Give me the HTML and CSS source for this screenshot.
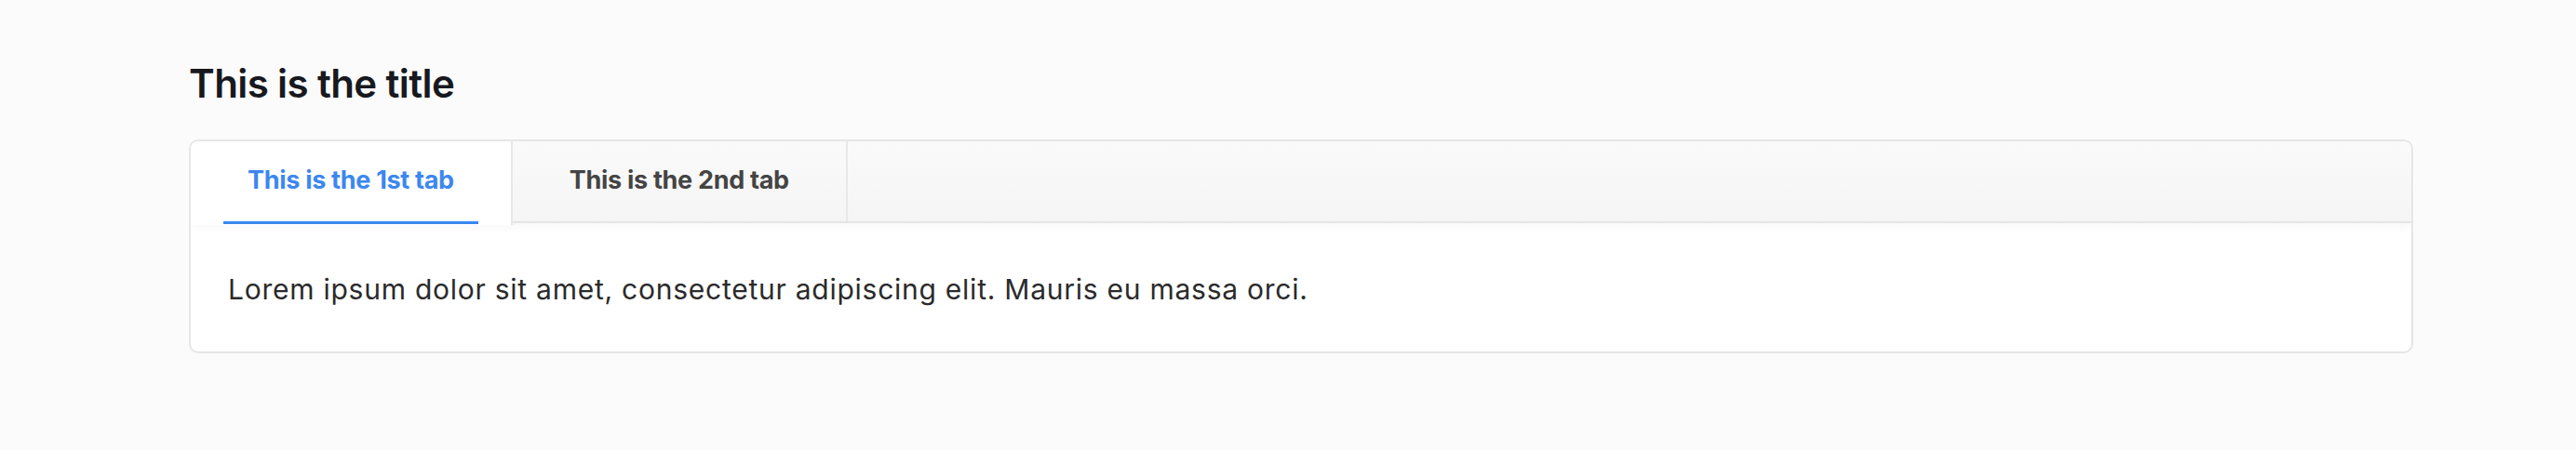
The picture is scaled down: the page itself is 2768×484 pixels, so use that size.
FILE: index.html
```html
<!DOCTYPE html>
<html lang="en">
<head>
  <meta charset="UTF-8">
  <title>Tabs</title>
  <link rel="stylesheet" href="styles.css">
</head>
<body>
  <div class="page">
    <h1 class="title">This is the title</h1>
    <div class="tabsCard">
      <div class="tabBar">
        <div class="tab active"><span class="tabLabel">This is the 1st tab</span></div>
        <div class="tab"><span class="tabLabel">This is the 2nd tab</span></div>
      </div>
      <div class="tabPanel">
        <p>Lorem ipsum dolor sit amet, consectetur adipiscing elit. Mauris eu massa orci.</p>
      </div>
    </div>
  </div>
</body>
</html>
```
FILE: styles.css
```css
body {
  margin: 0;
  background: #fbfbfb;
  font-family: Inter, "Noto Sans", sans-serif;
}

.page {
  padding: 60px 175px 0 203px;
}

.title {
  margin: 0 0 30px;
  font-size: 42px;
  line-height: 60px;
  font-weight: 600;
  letter-spacing: -0.6px;
  color: #17191f;
}

.tabsCard {
  background: #ffffff;
  border: 2px solid #e6e6e6;
  border-radius: 10px;
  overflow: hidden;
}

.tabBar {
  display: flex;
  height: 86px;
  background: linear-gradient(#fafafa, #f5f5f5);
  border-bottom: 2px solid #e4e4e4;
  box-shadow: 0 4px 10px rgba(0, 0, 0, 0.035);
  position: relative;
}

.tab {
  display: flex;
  align-items: flex-start;
  padding: 0 35px;
  border-right: 2px solid #e8e8e8;
  font-size: 27px;
  font-weight: 700;
  letter-spacing: -0.3px;
  color: #444444;
}

.tab.active {
  background: #ffffff;
  color: #3c87f0;
  margin-bottom: -4px;
  position: relative;
  z-index: 1;
}

.tabLabel {
  display: flex;
  align-items: center;
  justify-content: center;
  padding: 0 26px 4px;
  border-bottom: 3px solid transparent;
  height: 89px;
  box-sizing: border-box;
}

.tab.active .tabLabel {
  border-bottom-color: #3c87f0;
}

.tabPanel {
  padding: 51px 40px 47px;
}

.tabPanel p {
  margin: 0;
  font-size: 30px;
  line-height: 40px;
  letter-spacing: 0.75px;
  color: #2b2b2b;
}
```
